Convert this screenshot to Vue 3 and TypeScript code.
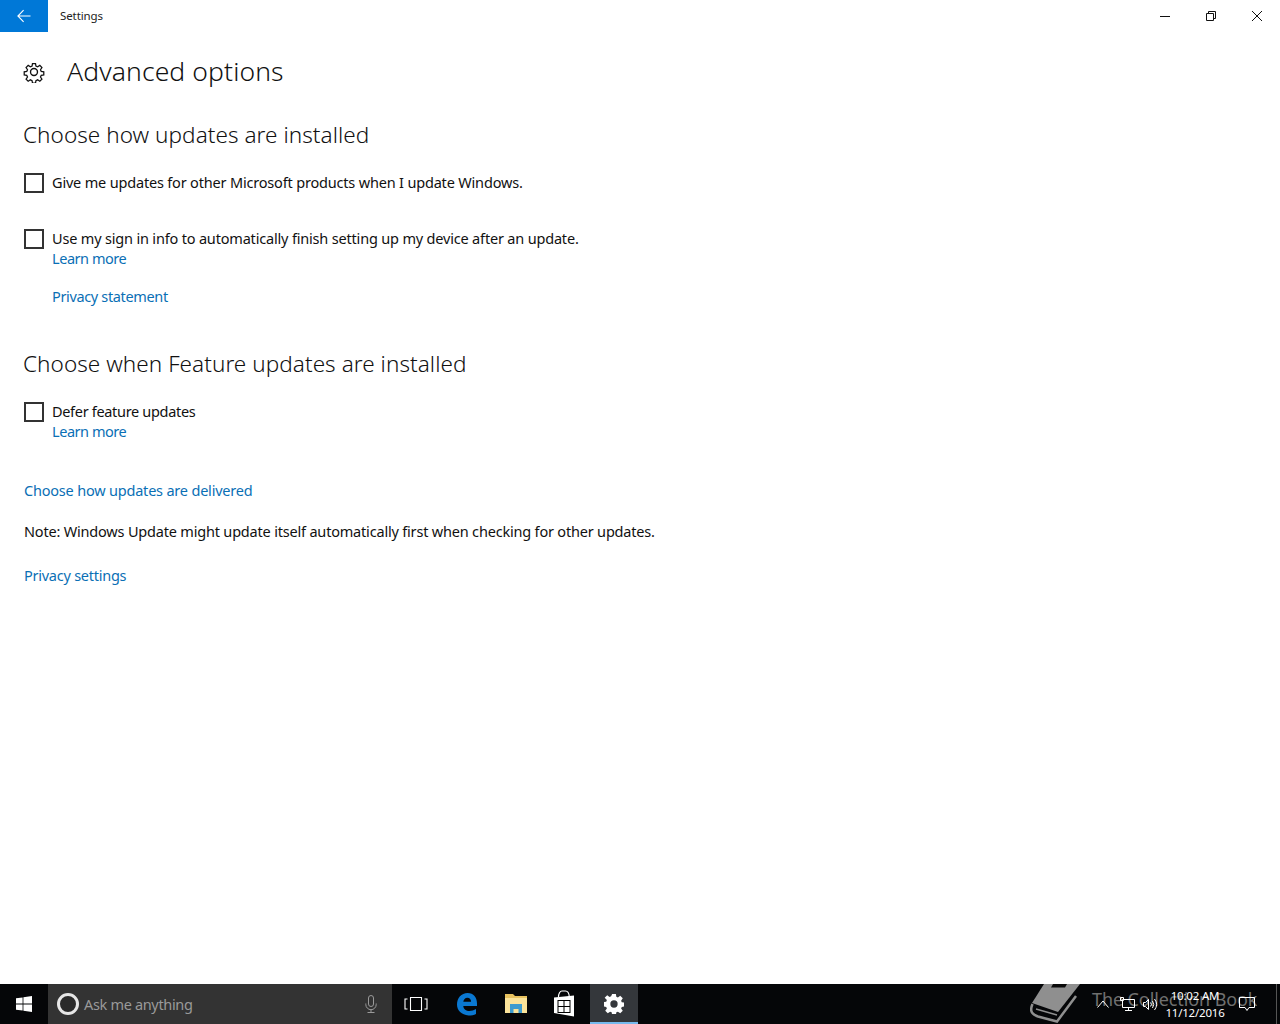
<script setup lang="ts">
const trayTime = '10:02 AM'
const trayDate = '11/12/2016'
</script>

<template>
  <div class="screen">
    <div class="window">
      <header class="titlebar">
        <button class="back" aria-label="Back">
          <svg width="14" height="14" viewBox="0 0 14 14" fill="none" stroke="#fff" stroke-width="1.1">
            <path d="M1 7H13.500M6.600 1.200L.9 7l5.700 5.800" />
          </svg>
        </button>
        <span class="app-name">Settings</span>
        <div class="controls">
          <span class="ctl">
            <svg width="12" height="12" viewBox="0 0 12 12" stroke="#111" fill="none"><path d="M1 6.500H11" /></svg>
          </span>
          <span class="ctl">
            <svg width="12" height="12" viewBox="0 0 12 12" stroke="#111" fill="none"><path d="M1.500 3.500h7v7h-7zM3.500 3.500v-2h7v7h-2" /></svg>
          </span>
          <span class="ctl">
            <svg width="12" height="12" viewBox="0 0 12 12" stroke="#111" fill="none"><path d="M1 1L11 11M11 1L1 11" /></svg>
          </span>
        </div>
      </header>

      <main class="content">
        <div class="page-title">
          <svg class="gear" width="22" height="22" viewBox="0 0 24 24" fill="none" stroke="#111" stroke-width="1.5">
            <path d="M10.200 2h3.600l.5 3 2 .9 2.600-1.700 2.500 2.500-1.700 2.600.9 2 3 .5v3.600l-3 .5-.9 2 1.700 2.600-2.500 2.500-2.600-1.700-2 .9-.5 3h-3.600l-.5-3-2-.9-2.600 1.700-2.500-2.500 1.700-2.600-.9-2-3-.5v-3.600l3-.5.9-2-1.700-2.600 2.500-2.500 2.600 1.700 2-.9z" transform="translate(12 12) scale(.92) translate(-12 -12)" />
            <circle cx="12" cy="12" r="3.800" />
          </svg>
          <h1>Advanced options</h1>
        </div>

        <h2 class="first-h">Choose how updates are installed</h2>
        <label class="check first-check"><span class="box"></span><span class="label">Give me updates for other Microsoft products when I update Windows.</span></label>
        <label class="check second-check"><span class="box"></span><span class="label">Use my sign in info to automatically finish setting up my device after an update.</span></label>
        <a class="link indent learn">Learn more</a>
        <a class="link indent privacy">Privacy statement</a>

        <h2 class="second-h">Choose when Feature updates are installed</h2>
        <label class="check defer"><span class="box"></span><span class="label">Defer feature updates</span></label>
        <a class="link indent learn">Learn more</a>

        <a class="link delivered">Choose how updates are delivered</a>
        <p class="note">Note: Windows Update might update itself automatically first when checking for other updates.</p>
        <a class="link settings">Privacy settings</a>
      </main>
    </div>

    <footer class="taskbar">
      <div class="watermark">
        <svg width="50" height="40" viewBox="0 0 50 40" fill="none">
          <path fill="#8f8f8f" d="M14 0H50L28 28 2 19z" />
          <path fill="#0a0a0a" d="M23 0h14l-2 3.500H21z" />
          <path stroke="#8f8f8f" stroke-width="2.500" d="M2.500 20C-1 28 3 31 8 32.500L27 37.500 46 12" />
          <path stroke="#8f8f8f" stroke-width="1.500" d="M6 25L27 31" />
        </svg>
        <span>The Collection Book</span>
      </div>

      <span class="start">
        <svg width="16" height="16" viewBox="0 0 16 16" fill="#fff">
          <path d="M0 2.300L6.600 1.400V7.600H0zM7.400 1.300L16 0V7.600H7.400zM0 8.400H6.600V14.600L0 13.700zM7.400 8.400H16V16L7.400 14.700z" />
        </svg>
      </span>
      <div class="search">
        <span class="cortana"></span>
        <span class="ask">Ask me anything</span>
        <svg class="mic" width="12" height="18" viewBox="0 0 12 18" fill="none" stroke="#9a9a9a">
          <rect x="3.500" y=".5" width="5" height="11" rx="2.500" />
          <path d="M.8 8.500v1a5.200 5.200 0 0 0 10.400 0v-1M6 14.800v2.500M2.500 17.500h7" />
        </svg>
      </div>
      <span class="task-icon view">
        <svg width="24" height="16" viewBox="0 0 24 16" fill="none" stroke="#fff" stroke-width="1.100">
          <path d="M6.500 1.500h11v13h-11zM3.500 3H1v10h2.500M20.500 3H23v10h-2.500" />
        </svg>
      </span>
      <span class="task-icon edge-app">
        <svg width="22" height="24" viewBox="0 0 22 24">
          <path fill="#0a78d2" d="M1 12.500C1 6 5.300 1 11.600 1 17.600 1 21 5.400 21 11.300v2.700H7.300c.3 3.400 2.900 5 6 5 2.400 0 4.700-.7 6.700-1.900v4.900c-2 1-4.600 1.600-7.500 1.600C5.600 22.600 1 18.600 1 12.500zM7.300 9.800h7.800c0-2.300-1.300-4-3.700-4s-3.700 1.700-4.100 4z" />
        </svg>
      </span>
      <span class="task-icon folder">
        <svg width="22" height="20" viewBox="0 0 22 20">
          <path fill="#e8c25f" d="M0 0h8l2 2h12v17H0z" />
          <path fill="#fbe39a" d="M0 4h22v15H0z" />
          <path fill="#3d9bcf" d="M5 10h12v9h-3.500v-4h-5v4H5z" />
        </svg>
      </span>
      <span class="task-icon store">
        <svg width="22" height="27" viewBox="0 0 22 27">
          <path fill="none" stroke="#fff" stroke-width="1.200" d="M5.500 7C5.500 3.500 7 1 9 1h3.500c2 0 3.500 2.500 3.800 5.500" />
          <path fill="#fff" d="M1 7.500L21 5.500V26.500L1 23z" />
          <path fill="#000" d="M4.500 10h13v13h-13z" />
          <path fill="#fff" d="M5.500 11h5v5h-5zM11.500 11h5v5h-5zM5.500 17h5v5h-5zM11.500 17h5v5h-5z" />
        </svg>
      </span>
      <span class="task-icon active">
        <svg width="20" height="20" viewBox="0 0 18 18">
          <path fill="#fff" fill-rule="evenodd" d="M7.300 0h3.400l.4 2.500 1.400.6 2.100-1.500 2.300 2.300-1.500 2.100.6 1.400 2.500.4v3.400l-2.500.4-.6 1.400 1.500 2.100-2.300 2.300-2.100-1.500-1.400.6-.4 2.500H7.300l-.4-2.500-1.400-.6-2.100 1.500-2.300-2.300 1.500-2.100-.6-1.400-2.500-.4V7.300l2.500-.4.6-1.400L.6 3.400l2.300-2.300 2.100 1.500 1.400-.6zM9 5.700a3.300 3.300 0 1 0 0 6.600 3.300 3.300 0 0 0 0-6.600z" />
        </svg>
      </span>

      <div class="tray">
        <svg class="chevron" width="12" height="8" viewBox="0 0 12 8" fill="none" stroke="#fff"><path d="M.5 7.500L6 1l5.500 6.500" /></svg>
        <svg class="network" width="15" height="14" viewBox="0 0 15 14" fill="none" stroke="#fff"><path d="M2.500 2.500h12v8h-12zM8.500 10.500v2.500M5 13.500h7M.5 .5h3v3h-3z" /></svg>
        <svg class="speaker" width="15" height="13" viewBox="0 0 15 13" fill="none" stroke="#fff"><path d="M.5 4.500h2L5.500 1.500v10l-3-3h-2zM7.500 4.500a3 3 0 0 1 0 4M9.500 3a6 6 0 0 1 0 7M11.500 1a9 9 0 0 1 0 11" /></svg>
        <div class="clock"><span>{{ trayTime }}</span><span>{{ trayDate }}</span></div>
        <svg class="tray-note" width="16" height="15" viewBox="0 0 16 15" fill="none" stroke="#fff"><path d="M.5 .5h15v10H10l-2 3-2-3H.5z" /></svg>
        <span class="edge"></span>
      </div>
    </footer>
  </div>
</template>

<style>
html, body { margin: 0; background: #fff; }
</style>

<style scoped>
.screen {
  width: 1280px;
  height: 1024px;
  display: flex;
  flex-direction: column;
  overflow: hidden;
  font-family: "Noto Sans", "Open Sans", sans-serif;
  color: #111;
}
.window { flex: 1; min-height: 0; display: flex; flex-direction: column; background: #fff; }
.titlebar { height: 32px; display: flex; align-items: center; flex: none; }
.back {
  width: 48px; height: 32px; border: 0; padding: 0; background: #0078d7;
  display: flex; align-items: center; justify-content: center;
}
.app-name { margin: -2px 0 0 12px; font-size: 11.5px; letter-spacing: -.1px; color: #222; }
.controls { margin-left: auto; display: flex; }
.ctl { width: 46px; height: 32px; display: flex; align-items: center; justify-content: center; }

.content { display: flex; flex-direction: column; align-items: flex-start; padding-left: 24px; }
.page-title { display: flex; align-items: center; margin-top: 20px; height: 40px; }
.gear { margin-left: -1px; }
h1 { margin: -2px 0 0 22px; font-size: 26.5px; font-weight: 300; line-height: 40px; letter-spacing: .1px; color: #111; }
h2 { margin: 0 0 0 -1px; font-size: 22.5px; font-weight: 300; line-height: 32px; letter-spacing: .06px; color: #111; }
.first-h { margin-top: 27px; }
.second-h { margin-top: 42px; }
.check { display: flex; align-items: center; gap: 8px; font-size: 14.5px; line-height: 20px; height: 20px; letter-spacing: -.18px; }
.label { margin-top: -2px; }
.box { width: 20px; height: 20px; box-sizing: border-box; border: 2px solid #333; flex: none; }
.first-check { margin-top: 22px; }
.second-check { margin-top: 36px; }
.defer { margin-top: 22px; letter-spacing: -.32px; }
.link { color: #0a6fb5; font-size: 14.5px; line-height: 20px; letter-spacing: -.25px; }
.learn { margin-top: -1px; letter-spacing: -.45px; }
.indent { margin-left: 28px; }
.privacy { margin-top: 18px; letter-spacing: -.35px; }
.delivered { margin-top: 39px; letter-spacing: -.2px; }
.note { margin: 21px 0 0; font-size: 14.5px; line-height: 20px; letter-spacing: -.19px; }
.settings { margin-top: 24px; }

.taskbar {
  position: relative;
  height: 40px; flex: none; background: #050608;
  display: flex; align-items: center; color: #fff;
}
.start { width: 48px; height: 40px; display: flex; align-items: center; justify-content: center; }
.search {
  width: 344px; height: 40px; background: #333333; display: flex; align-items: center; box-sizing: border-box;
  padding: 0 15px 0 9px;
}
.cortana { width: 16px; height: 16px; border: 3px solid #e6e6e6; border-radius: 50%; flex: none; background: #2a2a2a; }
.ask { margin-left: 5px; font-size: 14.5px; letter-spacing: -.33px; color: #9a9a9a; }
.mic { margin-left: auto; }
.task-icon { width: 48px; height: 40px; display: flex; align-items: center; justify-content: center; box-sizing: border-box; }
.edge-app { margin-left: 3px; }
.folder { width: 49px; }
.store { padding-bottom: 1px; }
.active { margin-left: 2px; background: #34373b; border-bottom: 2px solid #76b9ed; padding-top: 2px; }
.tray { margin-left: auto; display: flex; align-items: center; height: 40px; position: relative; z-index: 1; }
.chevron { margin-right: 11px; }
.network { margin-right: 8px; }
.clock {
  display: flex; flex-direction: column; align-items: center; width: 74px;
  font-size: 11.5px; line-height: 17px; letter-spacing: -.2px;
}
.tray-note { margin-left: 7px; margin-right: 25px; }
.edge { position: absolute; right: 3px; top: 0; width: 1px; height: 40px; background: #555; }
.watermark {
  position: absolute; left: 1030px; top: 0; height: 40px; overflow: hidden; display: flex; align-items: flex-start; gap: 12px;
  color: #6f6f6f; font-size: 18px; line-height: 30px; letter-spacing: -.1px; white-space: nowrap;
}
</style>
